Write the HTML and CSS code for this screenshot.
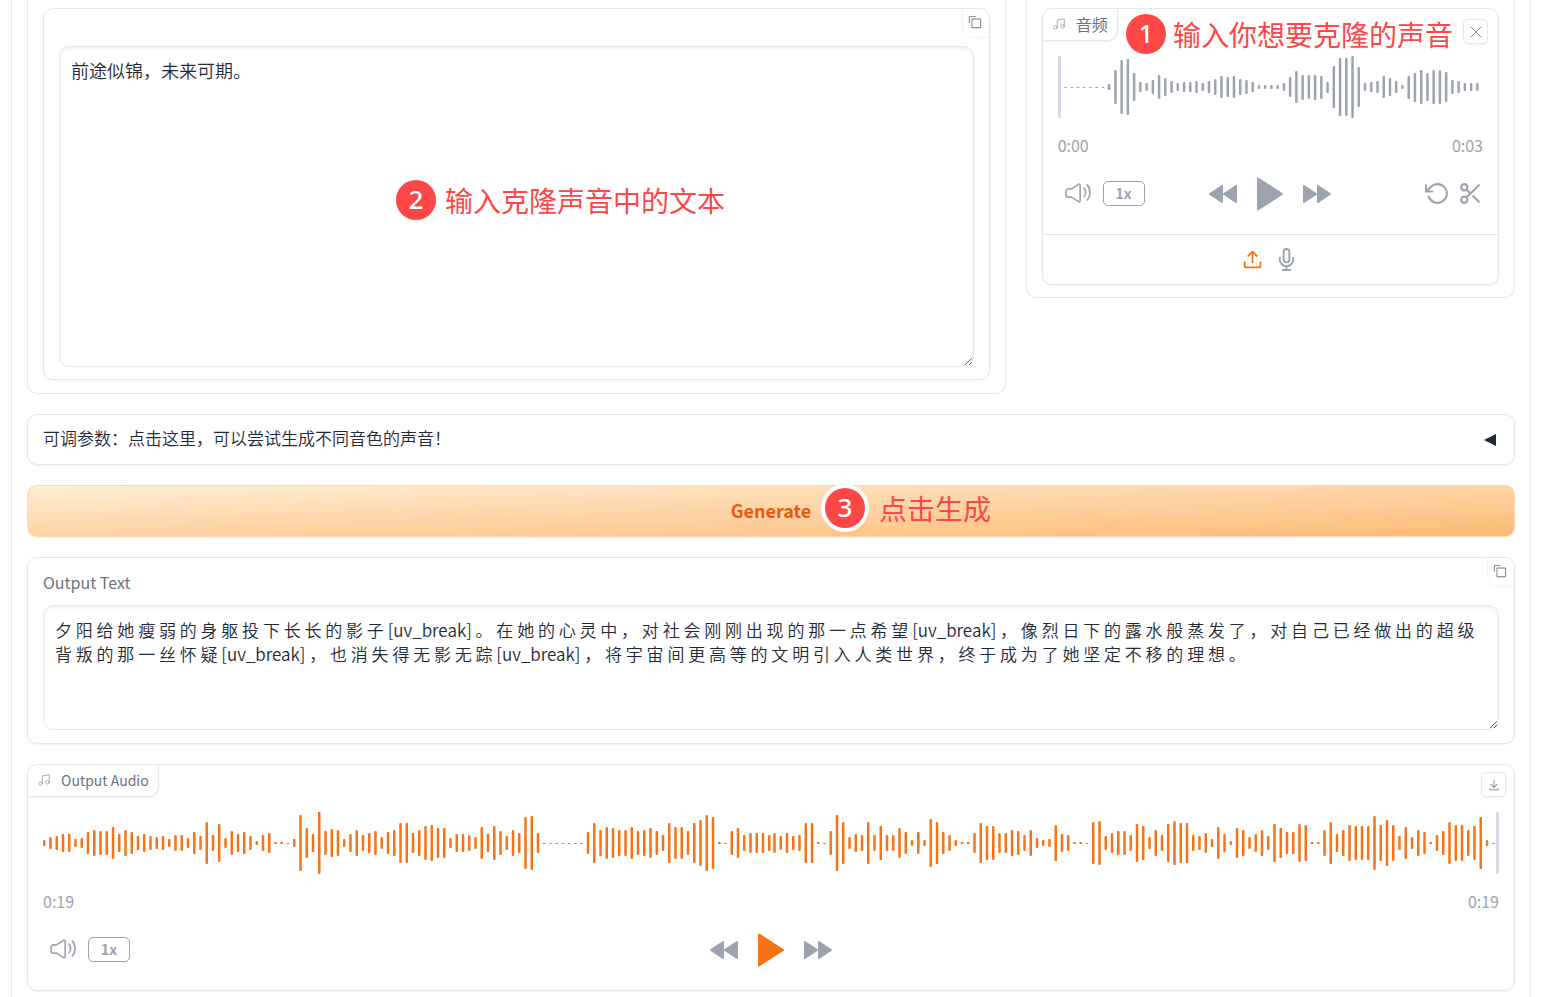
FILE: index.html
```
<!DOCTYPE html>
<html lang="zh-CN">
<head>
<meta charset="utf-8">
<title>ChatTTS</title>
<link rel="stylesheet" href="styles.css">
</head>
<body>
<svg class="sprite" aria-hidden="true">
  <symbol id="i-music" viewBox="0 0 24 24"><path d="M9 18V5l12-2v13"/><circle cx="6" cy="18" r="3"/><circle cx="18" cy="16" r="3"/></symbol>
  <symbol id="i-volume" viewBox="0 0 24 24"><path d="M1 13.86v-3.72a2 2 0 0 1 2-2h2.9a1 1 0 0 0 .55-.16l6-3.96A1 1 0 0 1 14 4.86v14.28a1 1 0 0 1-1.55.84l-6-3.96a1 1 0 0 0-.55-.16H3a2 2 0 0 1-2-2Z"/><path d="M17.5 7.5S19 9 19 11.5s-1.500 4-1.500 4M20.500 4.500S23 7 23 11.500s-2.500 7-2.500 7"/></symbol>
  <symbol id="i-copy" viewBox="0 0 32 32"><path d="M28 10v18H10V10h18m0-2H10a2 2 0 0 0-2 2v18a2 2 0 0 0 2 2h18a2 2 0 0 0 2-2V10a2 2 0 0 0-2-2Z"/><path d="M4 18H2V4a2 2 0 0 1 2-2h14v2H4Z"/></symbol>
  <symbol id="i-back" viewBox="0 0 28 18"><path d="M13 1v16L1 9ZM27 1v16L15 9Z"/></symbol>
  <symbol id="i-forward" viewBox="0 0 28 18"><path d="M1 1v16l12-8ZM15 1v16l12-8Z"/></symbol>
  <symbol id="i-play" viewBox="0 0 26 34"><path d="M1 1.500v31L25 17Z"/></symbol>
  <symbol id="i-undo" viewBox="0 0 24 24"><path d="M1 4v6h6"/><path d="M3.510 15a9 9 0 1 0 2.130-9.360L1 10"/></symbol>
  <symbol id="i-trim" viewBox="0 0 24 24"><circle cx="6" cy="6" r="3"/><circle cx="6" cy="18" r="3"/><path d="M20 4 8.120 15.880M14.470 14.480 20 20M8.120 8.120 12 12"/></symbol>
  <symbol id="i-upload" viewBox="0 0 24 24"><path d="M21 15v4a2 2 0 0 1-2 2H5a2 2 0 0 1-2-2v-4M17 8l-5-5-5 5M12 3v12"/></symbol>
  <symbol id="i-mic" viewBox="0 0 24 24"><path d="M12 1a3 3 0 0 0-3 3v8a3 3 0 0 0 6 0V4a3 3 0 0 0-3-3z"/><path d="M19 10v2a7 7 0 0 1-14 0v-2M12 19v4M8 23h8"/></symbol>
  <symbol id="i-download" viewBox="0 0 32 32"><path d="M26 24v4H6v-4H4v4a2 2 0 0 0 2 2h20a2 2 0 0 0 2-2v-4ZM26 14l-1.410-1.410L17 20.170V2h-2v18.170l-7.590-7.580L6 14l10 10Z"/></symbol>
  <symbol id="i-close" viewBox="0 0 24 24"><path d="m4 4 16 16M20 4 4 20"/></symbol>
</svg>

<main class="app">
  <div class="row">
    <section class="group group-text">
      <div class="block text-block">
        <button class="corner-button" aria-label="复制"><svg class="fill s14"><use href="#i-copy"/></svg></button>
        <textarea class="textbox tall" aria-label="输入文本">前途似锦，未来可期。</textarea>
        <div class="note note-text"><span class="badge">2</span><span>输入克隆声音中的文本</span></div>
      </div>
    </section>

    <section class="group group-audio">
      <div class="block audio-block">
        <div class="block-label"><svg class="line s14 thin"><use href="#i-music"/></svg><span>音频</span></div>
        <button class="tool-button clear" aria-label="清除"><svg class="line s14 thin"><use href="#i-close"/></svg></button>
        <div class="note note-audio"><span class="badge">1</span><span>输入你想要克隆的声音</span></div>
        <div class="player">
          <svg class="wave wave-idle" data-wave="input" preserveAspectRatio="none" viewBox="0 0 426 62"></svg>
          <div class="times"><time>0:00</time><time>0:03</time></div>
          <div class="controls">
            <div class="side">
              <button class="icon-button" aria-label="音量"><svg class="line s26 thin"><use href="#i-volume"/></svg></button>
              <button class="speed">1x</button>
            </div>
            <div class="transport">
              <button class="icon-button" aria-label="后退"><svg class="solid skip"><use href="#i-back"/></svg></button>
              <button class="icon-button" aria-label="播放"><svg class="solid play"><use href="#i-play"/></svg></button>
              <button class="icon-button" aria-label="前进"><svg class="solid skip"><use href="#i-forward"/></svg></button>
            </div>
            <div class="side edit">
              <button class="icon-button" aria-label="还原"><svg class="line s25"><use href="#i-undo"/></svg></button>
              <button class="icon-button" aria-label="裁剪"><svg class="line s25"><use href="#i-trim"/></svg></button>
            </div>
          </div>
        </div>
        <div class="sources">
          <button class="icon-button active" aria-label="上传"><svg class="line s21"><use href="#i-upload"/></svg></button>
          <button class="icon-button" aria-label="麦克风"><svg class="line s23"><use href="#i-mic"/></svg></button>
        </div>
      </div>
    </section>
  </div>

  <button class="block accordion" aria-expanded="false"><span>可调参数：点击这里，可以尝试生成不同音色的声音！</span><svg class="arrow" viewBox="0 0 12 12"><path d="M12 0v12L0 6Z"/></svg></button>

  <div class="generate-row">
    <button class="generate">Generate</button>
    <div class="note note-generate"><span class="badge ringed">3</span><span>点击生成</span></div>
  </div>

  <section class="block output-block">
    <label class="field-label" for="output-text">Output Text</label>
    <button class="corner-button" aria-label="复制"><svg class="fill s14"><use href="#i-copy"/></svg></button>
    <textarea class="textbox output" id="output-text">夕 阳 给 她 瘦 弱 的 身 躯 投 下 长 长 的 影 子 [uv_break] 。 在 她 的 心 灵 中 ， 对 社 会 刚 刚 出 现 的 那 一 点 希 望 [uv_break] ， 像 烈 日 下 的 露 水 般 蒸 发 了 ， 对 自 己 已 经 做 出 的 超 级 背 叛 的 那 一 丝 怀 疑 [uv_break] ， 也 消 失 得 无 影 无 踪 [uv_break] ， 将 宇 宙 间 更 高 等 的 文 明 引 入 人 类 世 界 ， 终 于 成 为 了 她 坚 定 不 移 的 理 想 。</textarea>
  </section>

  <section class="block audio-block">
    <div class="block-label"><svg class="line s14 thin"><use href="#i-music"/></svg><span>Output Audio</span></div>
    <button class="tool-button download" aria-label="下载"><svg class="fill s12"><use href="#i-download"/></svg></button>
    <div class="player">
      <svg class="wave wave-played" data-wave="output" preserveAspectRatio="none" viewBox="0 0 1456 62"></svg>
      <div class="times"><time>0:19</time><time>0:19</time></div>
      <div class="controls">
        <div class="side">
          <button class="icon-button" aria-label="音量"><svg class="line s26 thin"><use href="#i-volume"/></svg></button>
          <button class="speed">1x</button>
        </div>
        <div class="transport">
          <button class="icon-button" aria-label="后退"><svg class="solid skip"><use href="#i-back"/></svg></button>
          <button class="icon-button active" aria-label="播放"><svg class="solid play"><use href="#i-play"/></svg></button>
          <button class="icon-button" aria-label="前进"><svg class="solid skip"><use href="#i-forward"/></svg></button>
        </div>
        <div class="side edit"></div>
      </div>
    </div>
  </section>
</main>
<script src="wave.js"></script>
</body>
</html>
```
FILE: styles.css
```
* { box-sizing: border-box; }

body {
  margin: 0;
  background: #fff;
  color: #1f2937;
  font-family: "Noto Sans CJK SC", "Noto Sans", sans-serif;
  font-size: 16px;
  line-height: 24px;
}

button { font: inherit; color: inherit; cursor: pointer; }
svg { display: block; }
.sprite { display: none; }

.app {
  display: flex;
  flex-direction: column;
  gap: 20px;
  min-height: 100vh;
  margin: 0 12px 0 11px;
  padding: 0 15px 6px;
  border: solid #e5e7eb;
  border-width: 0 1px;
}

.row {
  display: grid;
  grid-template-columns: minmax(0, 2fr) minmax(0, 1fr);
  align-items: start;
  gap: 20px;
}

.group {
  padding: 8px 15px 13px;
  border: 1px solid #e5e7eb;
  border-top: 0;
  border-radius: 0 0 10px 10px;
}
.group-audio { padding-bottom: 12px; }

.block {
  position: relative;
  border: 1px solid #e5e7eb;
  border-radius: 10px;
  background: #fff;
  box-shadow: 0 1px 2px rgba(0, 0, 0, 0.05);
}
.text-block { padding: 37px 15px 12px; }
.output-block { padding: 12px 15px 13px; }

.field-label {
  display: block;
  margin-bottom: 11px;
  color: #6b7280;
  font-size: 16px;
}

.textbox {
  display: block;
  width: 100%;
  padding: 12px 11px;
  border: 1px solid #e5e7eb;
  border-radius: 10px;
  outline: none;
  background: #fff;
  box-shadow: inset 0 2px 4px rgba(0, 0, 0, 0.06);
  color: #1f2937;
  font: inherit;
  font-weight: 350;
  resize: vertical;
}
.tall { height: 321px; padding-top: 11px; font-size: 18px; }
.output { height: 125px; font-size: 17px; }

.corner-button {
  position: absolute;
  top: 0;
  right: 0;
  display: flex;
  padding: 6px 7px 8px 5px;
  border: 1px solid #f3f4f6;
  border-width: 0 0 1px 1px;
  border-radius: 0 10px;
  background: #fff;
  color: #6b7280;
}

.block-label {
  position: absolute;
  top: 0;
  left: 0;
  display: flex;
  align-items: center;
  gap: 10px;
  padding: 3px 9px 4px;
  border: 1px solid #e5e7eb;
  border-width: 0 1px 1px 0;
  border-radius: 10px 0;
  background: #fff;
  box-shadow: 0 1px 2px rgba(0, 0, 0, 0.05);
  color: #6b7280;
  font-size: 14px;
}
.group-audio .block-label { font-size: 16px; }
.block-label svg { color: #9ca3af; }

.tool-button {
  position: absolute;
  right: 10px;
  display: flex;
  align-items: center;
  justify-content: center;
  width: 25px;
  height: 25px;
  padding: 0;
  border: 1px solid #e5e7eb;
  border-radius: 5px;
  background: #fff;
  box-shadow: 0 1px 2px rgba(0, 0, 0, 0.05);
  color: #6b7280;
}
.clear { top: 10px; }
.download { top: 7px; right: 8px; }

.player { padding: 47px 15px 23px; }
.wave { width: 100%; height: 62px; }
.wave-idle { fill: #9ca3af; }
.wave-played { fill: #f97316; }
.wave .cursor { fill: #ddd6e9; }

.times {
  display: flex;
  justify-content: space-between;
  margin: 15px 0 20px;
  color: #9ca3af;
  font-size: 16px;
}

.controls {
  display: grid;
  grid-template-columns: 1fr auto 1fr;
  align-items: center;
  height: 34px;
  color: #9ca3af;
}
.side { display: flex; align-items: center; gap: 12px; padding: 0 0 2px 7px; }
.edit { justify-content: flex-end; gap: 8px; padding-left: 0; }
.transport { display: flex; align-items: center; gap: 20px; }

.icon-button {
  padding: 0;
  border: 0;
  background: none;
}
.active { color: #f97316; }

.speed {
  width: 42px;
  height: 25px;
  padding: 0;
  border: 1px solid #9ca3af;
  border-radius: 5px;
  background: none;
  font-size: 14px;
  font-weight: 700;
  line-height: 23px;
}

.sources {
  display: flex;
  align-items: center;
  justify-content: center;
  gap: 12px;
  height: 50px;
  border-top: 1px solid #e5e7eb;
  color: #9ca3af;
}

.line {
  fill: none;
  stroke: currentColor;
  stroke-width: 2;
  stroke-linecap: round;
  stroke-linejoin: round;
}
.thin { stroke-width: 1.5; }
.fill { fill: currentColor; }
.solid {
  fill: currentColor;
  stroke: currentColor;
  stroke-width: 2;
  stroke-linejoin: round;
}
.s12 { width: 12px; height: 12px; }
.s14 { width: 14px; height: 14px; }
.s21 { width: 21px; height: 21px; }
.s23 { width: 23px; height: 23px; }
.s25 { width: 25px; height: 25px; }
.s26 { width: 26px; height: 26px; }
.skip { width: 28px; height: 18px; }
.play { width: 26px; height: 34px; }

.accordion {
  display: flex;
  align-items: center;
  justify-content: space-between;
  width: 100%;
  height: 51px;
  padding: 0 18px 0 15px;
  font-size: 17px;
  font-weight: 350;
  text-align: left;
}
.accordion span { padding-bottom: 3px; }
.arrow { width: 12px; height: 12px; fill: #1f2937; }

.generate-row { position: relative; }
.generate {
  display: block;
  width: 100%;
  height: 52px;
  padding: 0 0 2px;
  border: 1px solid #fed7aa;
  border-radius: 10px;
  background: linear-gradient(to bottom right, #ffedd5, #fdba74);
  box-shadow: 0 1px 2px rgba(0, 0, 0, 0.05);
  color: #ea580c;
  font-size: 18px;
  font-weight: 600;
}

/* Numbered callouts laid over the form */
.note {
  position: absolute;
  display: flex;
  align-items: center;
  gap: 9px;
  color: #ff4747;
  font-size: 28px;
  font-weight: 400;
  line-height: 38px;
  white-space: nowrap;
  pointer-events: none;
}
.badge {
  width: 40px;
  height: 40px;
  border-radius: 50%;
  background: #ff4747;
  color: #fff;
  font-family: "Noto Sans", sans-serif;
  font-size: 26px;
  font-weight: 500;
  text-align: center;
}
.ringed { box-shadow: 0 0 0 4px #fff; }
.note-text { top: 171px; left: 352px; }
.note-audio { top: 5px; right: 45px; gap: 7px; }
.note-generate { top: 3px; left: calc(50% + 54px); gap: 14px; }
```
FILE: wave.js
```
const PITCH = 6.25;
const MID = 31;
const TILE_END = 116;

const waves = {
  input: {
    cursor: 0,
    bars: [1,1,1,1,1,1,1,1,6,34,54,56,28,10,8,14,24,18,12,8,10,10,12,8,12,16,22,20,22,16,14,10,4,4,4,4,8,20,32,25,24,25,23,11,42,58,58,62,40,8,10,12,22,18,12,4,23,29,34,28,34,34,30,14,12,8,8,8]
  },
  output: {
    cursor: 1453,
    bars: [6,12,14,18,18,8,10,22,26,24,24,32,18,26,22,14,18,14,12,14,8,16,16,10,22,14,42,16,38,10,24,18,22,14,4,16,20,2,2,1,8,56,30,18,62,24,28,26,8,18,26,16,20,24,12,22,
      26,40,40,20,26,34,36,30,30,10,18,18,16,12,32,18,34,24,14,26,20,52,54,20,1,1,1,1,1,1,1,22,40,26,32,30,26,26,32,24,26,30,24,16,40,32,32,24,40,46,56,52,2,1,24,30,16,20,20,20,
      16,20,14,20,14,16,40,40,2,1,24,56,42,12,18,16,42,16,34,16,16,30,22,6,22,6,48,42,22,16,6,2,2,20,40,34,34,20,20,26,24,16,26,10,6,8,36,18,16,2,2,1,42,44,14,20,24,24,16,38,34,
      12,26,16,38,44,40,40,16,14,20,8,32,18,4,30,26,12,18,26,14,38,30,22,22,38,36,2,2,26,42,18,26,36,34,34,34,54,36,46,36,14,32,12,26,22,2,16,24,42,36,36,26,34,52,6,1]
  }
};

function rect(svg, x, height, width, name) {
  const el = document.createElementNS("http://www.w3.org/2000/svg", "rect");
  el.setAttribute("x", x);
  el.setAttribute("y", Math.round(MID - height / 2));
  el.setAttribute("width", width);
  el.setAttribute("height", height);
  el.setAttribute("rx", height > 2 ? 1 : 0);
  if (name) el.setAttribute("class", name);
  svg.appendChild(el);
}

document.querySelectorAll("[data-wave]").forEach((svg) => {
  const wave = waves[svg.dataset.wave];
  wave.bars.forEach((height, i) => rect(svg, i * PITCH - (i > TILE_END ? 1 : 0), height, 2.5));
  rect(svg, wave.cursor, 62, 3, "cursor");
});
```
